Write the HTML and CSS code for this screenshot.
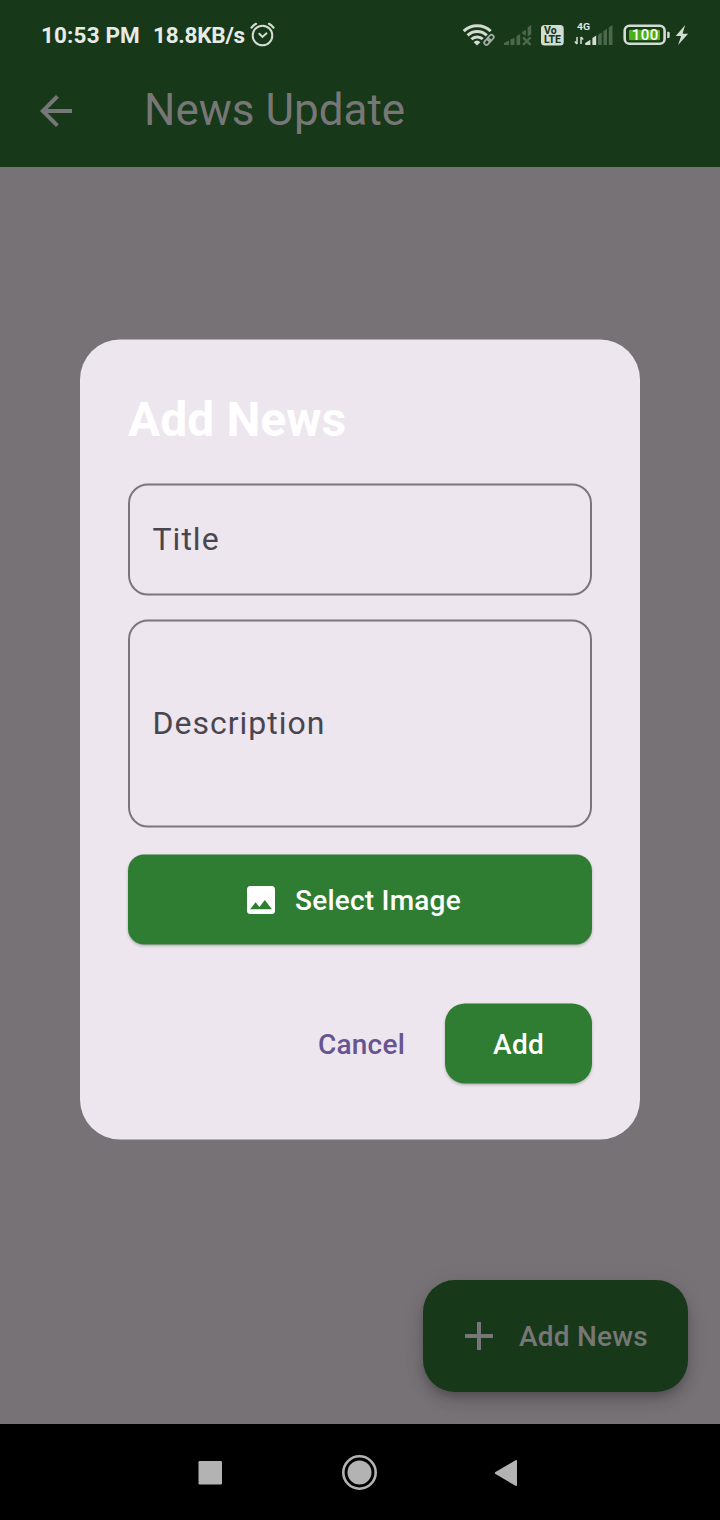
FILE: index.html
```html
<!DOCTYPE html>
<html lang="en">
<head>
<meta charset="utf-8">
<title>News Update</title>
<link rel="stylesheet" href="styles.css">
</head>
<body>
<div class="screen">
  <header class="header">
    <div class="status">
      <span class="clock">10:53 PM</span>
      <span class="speed">18.8KB/s</span>
      <svg class="alarm" width="26" height="26" viewBox="0 0 26 26" fill="none" stroke="#d3dcd3" stroke-width="2" stroke-linecap="round"><circle cx="13.500" cy="14.500" r="9.800"/><path d="M10.300 12.700l3.200 3.200 4-3.600"/><path d="M2.500 6.700Q4.500 4 7 2.800M24.500 6.700Q22.500 4 20 2.800" stroke-width="2.200"/></svg>
      <svg class="signals" width="232" height="30" viewBox="460 20 232 30">
        <g fill="none" stroke="#d3dcd3" stroke-width="3">
          <path d="M463.700 31.200A19.500 19.500 0 0 1 490.700 31.200"/>
          <path d="M467.600 35.300A13.800 13.800 0 0 1 486.800 35.300"/>
          <path d="M471.400 39.300A8.300 8.300 0 0 1 482.800 39"/>
        </g>
        <path d="M473.700 42.200Q477 39 480.400 42.200L477 45.600z" fill="#d3dcd3"/>
        <g transform="translate(489 39.800) rotate(-48)" fill="none" stroke="#a4b3a5" stroke-width="1.700">
          <rect x="-6" y="-2.200" width="7" height="4.400" rx="2.200"/><rect x="-1" y="-2.200" width="7" height="4.400" rx="2.200"/>
        </g>
        <path fill="#4b684d" d="M504 45v-2l5-2.600V45zM510.500 39.600l4-1.800V45h-4zM516.500 36l3.700-2V45h-3.700zM522.300 31.800l3.600-2v6l-3.600-2zM527.600 27.600l3.600-2.600v9.400l-3.600 2z"/>
        <path d="M523 37.400l7.600 7.400M530.600 37.400L523 44.800" stroke="#4b684d" stroke-width="2.400"/>
        <rect x="541" y="25" width="22.700" height="20.400" rx="3.500" fill="#d3dcd3"/>
        <text class="volte" x="544" y="34.300" textLength="12.600" lengthAdjust="spacingAndGlyphs">Vo</text>
        <text class="volte" x="544" y="43.400" textLength="17" lengthAdjust="spacingAndGlyphs">LTE</text>
        <text class="network" x="577" y="30.300" textLength="13" lengthAdjust="spacingAndGlyphs">4G</text>
        <path d="M577 37v7M574.800 41.500l2.200 2.500M581 44v-7M583.200 39.500L581 37" fill="none" stroke="#d3dcd3" stroke-width="1.500"/>
        <path d="M585.200 45v-2l5.200-3.200V45zM592.400 38l3.800-2.400V45h-3.800z" fill="#d3dcd3"/>
        <path d="M598 34.800l3.800-2.200V45H598zM603.400 31l3.600-2.200V45h-3.600zM608.800 27.400l3.700-2.400v20h-3.700z" fill="#4b684d"/>
        <rect x="624.700" y="25.800" width="39.900" height="18" rx="4.800" fill="none" stroke="#d3dcd3" stroke-width="2.600"/>
        <rect x="629" y="29.700" width="31" height="10.600" rx="1" fill="#4caf16"/>
        <path d="M667.200 31.700h1.200q1.300 0 1.300 1.400v3.600q0 1.400-1.300 1.400h-1.200z" fill="#d3dcd3"/>
        <text class="battery" x="631.800" y="40.300" textLength="26.400">100</text>
        <path d="M685.200 25l-9.500 11h5.400l-3 9 10-11.300h-5.600z" fill="#d3dcd3"/>
      </svg>
    </div>
    <div class="appbar">
      <svg class="back" width="32" height="32" viewBox="4 4 16 16"><path fill="#777" d="M20 11H7.830l5.590-5.590L12 4l-8 8 8 8 1.410-1.410L7.830 13H20z"/></svg>
      <h1 class="page-title">News Update</h1>
    </div>
  </header>
  <main class="content">
    <button class="fab">
      <svg width="28" height="28" viewBox="0 0 28 28"><path d="M12 0h4v12h12v4H16v12h-4V16H0v-4h12z" fill="#777"/></svg>
      <span class="fab-label">Add News</span>
    </button>
  </main>
  <nav class="navbar">
    <svg class="recent" width="24" height="24"><rect x=".5" y="0" width="23.500" height="23.500" rx="1.200" fill="#b3b3b3"/></svg>
    <svg class="home" width="36" height="36"><circle cx="17.500" cy="17.500" r="16.200" fill="none" stroke="#b3b3b3" stroke-width="2.600"/><circle cx="17.500" cy="17.500" r="12" fill="#b3b3b3"/></svg>
    <svg class="prev" width="24" height="28"><path d="M1.500 13L21.500 1.200Q23 .5 23 2v24q0 1.500-1.500.8L1.500 15q-1.500-1 0-2z" fill="#b3b3b3"/></svg>
  </nav>
  <div class="overlay">
    <section class="dialog" role="dialog">
      <h2 class="dialog-title">Add News</h2>
      <div class="field field-title">Title</div>
      <div class="field field-description">Description</div>
      <button class="primary select">
        <svg width="28" height="28" viewBox="3 3.300 18 18"><path fill="#fff" d="M21 19V5c0-1.100-.9-2-2-2H5c-1.100 0-2 .9-2 2v14c0 1.100.9 2 2 2h14c1.100 0 2-.9 2-2zM8.500 13.500l2.500 3.010L14.500 12l4.500 6H5l3.500-4.500z"/></svg>
        <span>Select Image</span>
      </button>
      <div class="actions">
        <button class="cancel">Cancel</button>
        <button class="primary add">Add</button>
      </div>
    </section>
  </div>
</div>
</body>
</html>
```
FILE: styles.css
```css
* { box-sizing: border-box; }
body { margin: 0; font-family: Roboto, "Liberation Sans", sans-serif; }
h1, h2 { margin: 0; }
button { border: 0; margin: 0; padding: 0; background: none; font: 500 28px/40px Roboto, "Liberation Sans", sans-serif; letter-spacing: .22px; }
svg { display: block; flex: none; overflow: visible; }

.screen { position: relative; width: 720px; height: 1520px; display: flex; flex-direction: column; background: #777276; overflow: hidden; }
.header { height: 167px; background: #173819; }
.status { height: 55px; display: flex; padding: 20px 0 0 41px; color: #e7ebe7; font-size: 22.5px; font-weight: 700; line-height: 30px; white-space: nowrap; }
.clock { width: 112px; letter-spacing: .15px; }
.speed { width: 96px; letter-spacing: -.25px; }
.alarm { margin-top: 1px; }
.signals { margin-left: 185px; }
.volte { font: 800 10px Roboto, sans-serif; fill: #173819; }
.network { font: 700 9.5px Roboto, sans-serif; fill: #e0e6e0; }
.battery { font: 500 15px Roboto, sans-serif; fill: #fff; }
.appbar { height: 112px; display: flex; align-items: center; padding-left: 40px; }
.back { margin-right: 72px; }
.page-title { font-size: 44px; font-weight: 400; line-height: 56px; color: #777; padding-bottom: 2px; }

.content { flex: 1; display: flex; align-items: flex-end; justify-content: flex-end; padding: 0 32px 32px; }
.fab { width: 265px; height: 112px; border-radius: 32px; background: #173819; color: #777; display: flex; align-items: center; padding-left: 42px; gap: 26px; box-shadow: 0 6px 10px -2px rgba(0,0,0,.2), 0 10px 18px rgba(0,0,0,.12), 0 2px 26px rgba(0,0,0,.06); }
.fab-label { padding-top: 2px; }
.navbar { height: 96px; background: #000; display: flex; align-items: center; padding: 1px 0 0 198px; }
.home { margin-left: 120px; }
.prev { margin-left: 116px; }

.overlay { position: absolute; inset: 0; padding: 339px 80px 0; }
.dialog { height: 800px; border-radius: 40px; background: #ede6ee; padding: 48px; display: flex; flex-direction: column; transform: translateY(.5px); }
.dialog-title { font-size: 48px; font-weight: 700; line-height: 64px; color: #fff; margin-bottom: 32px; letter-spacing: .05px; }
.field { border: 2px solid #7a757f; border-radius: 20px; padding: 0 0 2px 22.5px; display: flex; align-items: center; font-size: 32px; letter-spacing: 1px; color: #49454f; }
.field-title { height: 112px; margin-bottom: 24px; }
.field-description { height: 208px; margin-bottom: 27px; }
.primary { background: #2f7d32; color: #fff; box-shadow: 0 1.5px 3px rgba(0,0,0,.25); }
.select { height: 90px; border-radius: 16px; display: flex; align-items: center; padding: 1px 0 0 119px; gap: 20px; }
.actions { margin-top: 59px; display: flex; justify-content: flex-end; align-items: center; }
.cancel { color: #68548e; margin-right: 40px; padding-top: 2px; }
.add { width: 147px; height: 80px; border-radius: 20px; padding-top: 2px; }
```
